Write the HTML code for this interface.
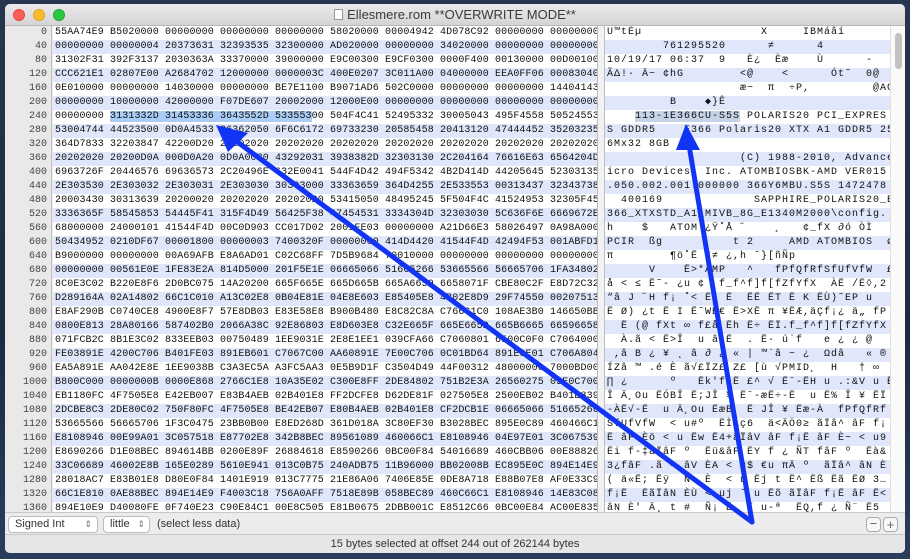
<!DOCTYPE html>
<html><head><meta charset="utf-8"><style>
*{margin:0;padding:0;box-sizing:border-box}
body{width:910px;height:559px;overflow:hidden;background:linear-gradient(180deg,#27354f,#1c2a44 60%,#2a3d5c);font-family:"Liberation Sans",sans-serif;position:relative}
#win{position:absolute;left:5px;top:4px;width:900px;height:549px;background:#ececec;border-radius:5px;overflow:hidden}
#title{position:absolute;left:0;top:0;width:900px;height:22px;background:linear-gradient(#ebe9eb,#d5d3d5);border-bottom:1px solid #b8b8b8;text-align:center;font-size:13px;line-height:22px;color:#3a3a3a}
.tl{position:absolute;top:5px;width:12px;height:12px;border-radius:50%}
#gut{position:absolute;left:0;top:22px;width:47px;height:486px;background:#e9e9e9;border-right:1px solid #bdbdbd}
#hex{position:absolute;left:48px;top:22px;width:544px;height:486px;background:#fff;overflow:hidden}
#sep{position:absolute;left:592px;top:22px;width:8px;height:486px;background:#f2f2f2;border-left:1px solid #bdbdbd;border-right:1px solid #bdbdbd}
#asc{position:absolute;left:600px;top:22px;width:285px;height:486px;background:#fff;overflow:hidden}
#sb{position:absolute;left:885px;top:22px;width:15px;height:486px;background:#fafafa;border-left:1px solid #e0e0e0}
.r{height:14px;line-height:14px;font-family:"Liberation Mono",monospace;font-size:10px;white-space:pre;color:#111}
.r:nth-child(even){background:#e1e7fb}
#gut .r{background:none;text-align:right;padding-right:4px;color:#444}
#hex .r{padding-left:2px;letter-spacing:.11px}
#asc .r{padding-left:2px;letter-spacing:1px}
#bot{position:absolute;left:0;top:508px;width:900px;height:23px;background:#ececec;border-top:1px solid #c8c8c8;border-bottom:1px solid #c8c8c8}
.pop{position:absolute;top:3px;height:17px;border:1px solid #bcbcbc;border-radius:4px;background:#fff;font-size:11px;line-height:15px;padding-left:6px;color:#333}
#st{position:absolute;left:0;top:531px;width:900px;height:18px;text-align:center;font-size:11px;line-height:18px;color:#333;background:#e6e6e6}
</style></head><body>
<div id="win">
<div id="title"><span style="display:inline-block;width:9px;height:11px;border:1px solid #999;background:#fff;vertical-align:-1px;margin-right:4px"></span>Ellesmere.rom **OVERWRITE MODE**</div>
<div class="tl" style="left:8px;background:#fc5f57;border:1px solid #de4a41"></div>
<div class="tl" style="left:28px;background:#fdbc2e;border:1px solid #dea123"></div>
<div class="tl" style="left:48px;background:#29c840;border:1px solid #1eab2e"></div>
<div id="gut">
<div class="r">0</div><div class="r">40</div><div class="r">80</div><div class="r">120</div><div class="r">160</div><div class="r">200</div><div class="r">240</div><div class="r">280</div><div class="r">320</div><div class="r">360</div><div class="r">400</div><div class="r">440</div><div class="r">480</div><div class="r">520</div><div class="r">560</div><div class="r">600</div><div class="r">640</div><div class="r">680</div><div class="r">720</div><div class="r">760</div><div class="r">800</div><div class="r">840</div><div class="r">880</div><div class="r">920</div><div class="r">960</div><div class="r">1000</div><div class="r">1040</div><div class="r">1080</div><div class="r">1120</div><div class="r">1160</div><div class="r">1200</div><div class="r">1240</div><div class="r">1280</div><div class="r">1320</div><div class="r">1360</div>
</div>
<div id="hex">
<div class="r">55AA74E9 B5020000 00000000 00000000 00000000 58020000 00004942 4D078C92 00000000 00000000</div>
<div class="r">00000000 00000004 20373631 32393535 32300000 AD020000 00000000 34020000 00000000 00000000</div>
<div class="r">31302F31 392F3137 2030363A 33370000 39000000 E9C00300 E9CF0300 0000F400 00130000 00D00100</div>
<div class="r">CCC621E1 02807E00 A2684702 12000000 0000003C 400E0207 3C011A00 04000000 EEA0FF06 00083040</div>
<div class="r">0E010000 00000000 14030000 00000000 BE7E1100 B9071AD6 502C0000 00000000 00000000 14404143</div>
<div class="r">00000000 10000000 42000000 F07DE607 20002000 12000E00 00000000 00000000 00000000 00000000</div>
<div class="r">00000000 <span style="background:#a9cdf6">3131332D 31453336 3643552D 533553</span>00 504F4C41 52495332 30005043 495F4558 50524553</div>
<div class="r">53004744 44523500 0D0A4533 36362050 6F6C6172 69733230 20585458 20413120 47444452 35203235</div>
<div class="r">364D7833 32203847 42200D20 20202020 20202020 20202020 20202020 20202020 20202020 20202020</div>
<div class="r">20202020 20200D0A 000D0A20 0D0A0020 43292031 3938382D 32303130 2C204164 76616E63 6564204D</div>
<div class="r">6963726F 20446576 69636573 2C20496E 632E0041 544F4D42 494F5342 4B2D414D 44205645 52303135</div>
<div class="r">2E303530 2E303032 2E303031 2E303030 30303000 33363659 364D4255 2E533553 00313437 32343738</div>
<div class="r">20003430 30313639 20200020 20202020 20202020 53415050 48495245 5F504F4C 41524953 32305F45</div>
<div class="r">3336365F 58545853 54445F41 315F4D49 56425F38 47454531 3334304D 32303030 5C636F6E 6669672E</div>
<div class="r">68000000 24000101 41544F4D 00C0D903 CC017D02 2001FE03 00000000 A21D66E3 58026497 0A98A000</div>
<div class="r">50434952 0210DF67 00001800 00000003 7400320F 00000000 414D4420 41544F4D 42494F53 001ABFD1</div>
<div class="r">B9000000 00000000 00A69AFB E8A6AD01 C02C68FF 7D5B9684 70010000 00000000 00000000 00000000</div>
<div class="r">00000000 00561E0E 1FE83E2A 814D5000 201F5E1E 06665066 51665266 53665566 56665706 1FA34802</div>
<div class="r">8C0E3C02 B220E8F6 2D0BC075 14A20200 665F665E 665D665B 665A6659 6658071F CBE80C2F E8D72C32</div>
<div class="r">D289164A 02A14802 66C1C010 A13C02E8 0B04E81E 04E8E603 E85405E8 4B02E8D9 29F74550 00207513</div>
<div class="r">E8AF290B C0740CE8 4900E8F7 57E8DB03 E83E58E8 B900B480 E8C82C8A C766C1C0 108AE3B0 146650BB</div>
<div class="r">0800E813 28A80166 587402B0 2066A38C 92E86803 E8D603E8 C32E665F 665E665D 665B6665 66596658</div>
<div class="r">071FCB2C 8B1E3C02 833EEB03 00750489 1EE9031E 2E8E1EE1 039CFA66 C7060801 6500C0F0 C7064000</div>
<div class="r">FE03891E 4200C706 B401FE03 891EB601 C7067C00 AA60891E 7E00C706 0C01BD64 891E0E01 C706A804</div>
<div class="r">EA5A891E AA042E8E 1EE9038B C3A3EC5A A3FC5AA3 0E5B9D1F C3504D49 44F00312 48000000 7000BD00</div>
<div class="r">B800C000 0000000B 0000E868 2766C1E8 10A35E02 C300E8FF 2DE84802 751B2E3A 26560275 05E0C700</div>
<div class="r">EB1180FC 4F7505E8 E42EB007 E83B4AEB 02B401E8 FF2DCFE8 D62DE81F 027505E8 2500EB02 B401E839</div>
<div class="r">2DCBE8C3 2DE80C02 750F80FC 4F7505E8 BE42EB07 E80B4AEB 02B401E8 CF2DCB1E 06665066 51665266</div>
<div class="r">53665566 56665706 1F3C0475 23BB0B00 E8ED268D 361D018A 3C80EF30 B3028BEC 895E0C89 460466C1</div>
<div class="r">E8108946 00E99A01 3C057518 E87702E8 342B8BEC 89561089 460066C1 E8108946 04E97E01 3C067539</div>
<div class="r">E8690266 D1E08BEC 894614BB 0200E89F 26884618 E8590266 0BC00F84 54016689 460CBB06 00E88826</div>
<div class="r">33C06689 46002E8B 165E0289 5610E941 013C0B75 240ADB75 11B96000 BB02008B EC895E0C 894E14E9</div>
<div class="r">28018AC7 E83B01E8 D80E0F84 1401E919 013C7775 21E86A06 7406E85E 0DE8A718 E88B07E8 AF0E33C9</div>
<div class="r">66C1E810 0AE88BEC 894E14E9 F4003C18 756A0AFF 7518E89B 058BEC89 460C66C1 E8108946 14E83C08</div>
<div class="r">894E10E9 D40080FE 0F740E23 C90E84C1 00E8C505 E81B0675 2DBB001C E8512C66 0BC00E84 AC00E835</div>
</div>
<div id="sep"></div>
<div id="asc">
<div class="r">U™tÈµ                 X     IBMáâí</div>
<div class="r">        761295520      ≠      4</div>
<div class="r">10/19/17 06:37  9   È¿  Èæ    Ù      -</div>
<div class="r">ÃΔ!· Ä~ ¢hG        <@    <      Ót˜  0@</div>
<div class="r">                   æ~  π  ÷P,         @AC</div>
<div class="r">         B    ◆}Ê</div>
<div class="r">    <span style="background:#c4d3e6">113-1E366CU-S5S</span> POLARIS20 PCI_EXPRES</div>
<div class="r">S GDDR5    E366 Polaris20 XTX A1 GDDR5 25</div>
<div class="r">6Mx32 8GB</div>
<div class="r">                   (C) 1988-2010, Advanced M</div>
<div class="r">icro Devices, Inc. ATOMBIOSBK-AMD VER015</div>
<div class="r">.050.002.001.000000 366Y6MBU.S5S 1472478</div>
<div class="r">  400169             SAPPHIRE_POLARIS20_E</div>
<div class="r">366_XTXSTD_A1_MIVB_8G_E1340M2000\config.</div>
<div class="r">h    $   ATOM ¿Ÿ˚Å ˝    ¸   ¢_fX ∂ó ÒÌ</div>
<div class="r">PCIR  ßg          t 2     AMD ATOMBIOS  ø-</div>
<div class="r">π        ¶ö˚Ë ¶≠ ¿,h ˇ}[ñÑp</div>
<div class="r">      V    Ë>*ÅMP   ^   fPfQfRfSfUfVfW  £H</div>
<div class="r">å < ≤ Ë˜- ¿u ¢  f_f^f]f[fZfYfX  ÀË /Ë◊,2</div>
<div class="r">“â J ˝H f¡ ˚< Ë  Ë  ËË ËT Ë K ËÙ)˜EP u</div>
<div class="r">Ë Ø) ¿t Ë I Ë˜WË€ Ë>XË π ¥ËÆ,äÇf¡¿ ä„ fP</div>
<div class="r">  Ë (@ fXt ∞ f£å Ëh Ë÷ ËÏ.f_f^f]f[fZfYfX</div>
<div class="r">  À.ã < Ë>Î  u â Ë  . Ë· ú˙f   e ¿ ¿ @</div>
<div class="r"> ,â B ¿ ¥ ˛ â ∂ ¿ « | ™`â ~ ¿  Ωdâ   « ®</div>
<div class="r">ÍZâ ™ .é È ã√£ÏZ£ Z£ [ù √PMID¸  H   † ∞</div>
<div class="r">∏ ¿      º   Ëk'f¡Ë £^ √ Ë˘-ËH u .:&V u ËG</div>
<div class="r">Î Ä¸Ou ËÓBÎ Ë;JÎ ¥ Ë˘-æË÷-Ë  u Ë% Î ¥ ËÏ</div>
<div class="r">-ÀË√-Ë  u Ä¸Ou ËæB  Ë JÎ ¥ Ëæ-À  fPfQfRf</div>
<div class="r">SfUfVfW  < u#º  ËÌ&ç6  ä<ÄÖ0≥ ãÏâ^ âF f¡</div>
<div class="r">Ë âF Èö < u Ëw Ë4+ãÏâV âF f¡Ë âF È~ < u9</div>
<div class="r">Ëi f-‡ãÏâF º  Ëü&âF ËY f ¿ ÑT fâF º  Ëà&</div>
<div class="r">3¿fâF .ã ^ âV ÈA < u$ €u πÄ º  ãÏâ^ âN È</div>
<div class="r">( ä«Ë; Ëÿ  Ñ  È  < u Ëj t Ë^ Ëß Ëã ËØ 3…</div>
<div class="r">f¡Ë  ËãÏâN ÈÙ < uj ˇ u Ëõ ãÏâF f¡Ë âF Ë<</div>
<div class="r">âN È' Ä˛ t #  Ñ¡ Ë  Ë u-ª  ËQ,f ¿ Ñ¨ Ë5</div>
</div>
<div id="sb"><div style="position:absolute;left:4px;top:7px;width:7px;height:36px;border-radius:4px;background:#c2c2c2"></div></div>
<div id="bot">
<div class="pop" style="left:3px;width:90px">Signed Int<span style="position:absolute;right:5px;font-size:9px;color:#777">⇕</span></div>
<div class="pop" style="left:98px;width:47px">little<span style="position:absolute;right:4px;font-size:9px;color:#777">⇕</span></div>
<div style="position:absolute;left:152px;top:3px;font-size:11px;line-height:17px;color:#333">(select less data)</div>
<div style="position:absolute;left:861px;top:4px;width:15px;height:15px;border:1px solid #aaa;border-radius:4px;background:#f8f8f8;font-size:13px;line-height:12px;text-align:center;color:#666">−</div>
<div style="position:absolute;left:878px;top:4px;width:15px;height:15px;border:1px solid #aaa;border-radius:4px;background:#f8f8f8;font-size:13px;line-height:13px;text-align:center;color:#666">+</div>
</div>
<div id="st">15 bytes selected at offset 244 out of 262144 bytes</div>
</div>
<svg width="910" height="559" style="position:absolute;left:0;top:0">
<g stroke="#1234f5" stroke-width="5" fill="none" stroke-linecap="round">
<line x1="752" y1="522" x2="232" y2="138"/>
<line x1="752" y1="522" x2="689" y2="145"/>
</g>
<polygon points="216,125 248,133 228,152" fill="#1234f5"/>
<polygon points="686,124 700,150 676,150" fill="#1234f5"/>
</svg>
</body></html>
